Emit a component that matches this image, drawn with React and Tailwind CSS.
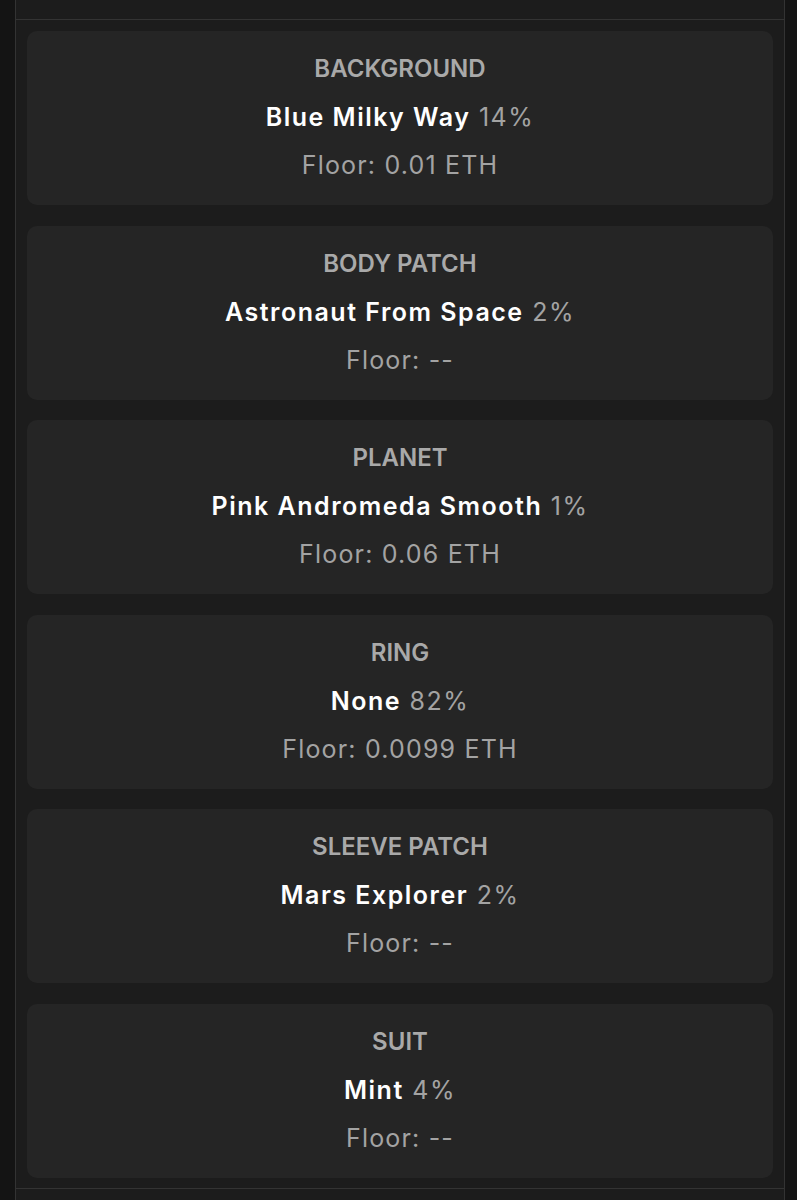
import React from "react";

const traits = [
  { type: "BACKGROUND", value: "Blue Milky Way", pct: "14%", floor: "0.01 ETH" },
  { type: "BODY PATCH", value: "Astronaut From Space", pct: "2%", floor: "--" },
  { type: "PLANET", value: "Pink Andromeda Smooth", pct: "1%", floor: "0.06 ETH" },
  { type: "RING", value: "None", pct: "82%", floor: "0.0099 ETH" },
  { type: "SLEEVE PATCH", value: "Mars Explorer", pct: "2%", floor: "--" },
  { type: "SUIT", value: "Mint", pct: "4%", floor: "--" },
];

function TraitCard({ trait }) {
  return (
    <div className="rounded-[10px] bg-[#252525] pt-[14px] pb-[16px] text-center text-[24px] leading-[48px]">
      <div className="font-semibold text-[#a9a9a9]">{trait.type}</div>
      <div className="text-[25px] tracking-[0.06em]">
        <span className="font-semibold text-white">{trait.value}</span>{" "}
        <span className="text-[#a3a3a3]">{trait.pct}</span>
      </div>
      <div className="text-[25px] tracking-[0.047em] text-[#a3a3a3]">Floor: {trait.floor}</div>
    </div>
  );
}

export default function App() {
  return (
    <div className="min-h-[1200px] bg-[#141414] pl-[15px] pr-[12px]" style={{ fontFamily: "Inter, 'Noto Sans', sans-serif" }}>
      <div className="min-h-[1200px] border-x border-[#333333] bg-[#1c1c1c]">
        <div className="h-[19px]" />
        <div className="border-y border-[#333333] px-[11px] pt-[11px] pb-[10px]">
          <div className="flex flex-col gap-[20.6px]">
            {traits.map((t) => (
              <TraitCard key={t.type} trait={t} />
            ))}
          </div>
        </div>
      </div>
    </div>
  );
}
